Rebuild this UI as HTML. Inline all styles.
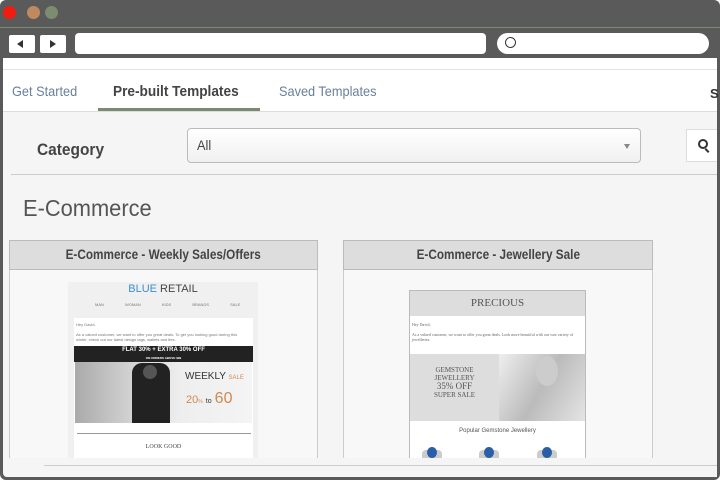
<!DOCTYPE html>
<html><head><style>
*{margin:0;padding:0;box-sizing:border-box}
body{width:720px;height:480px;background:#fff;font-family:"Liberation Sans",sans-serif;position:relative;overflow:hidden}
.a{position:absolute}
.serif{font-family:"Liberation Serif",serif}
.n{transform:scaleX(0.91);transform-origin:left top;white-space:nowrap}
</style></head><body>
<div class="a" style="left:0;top:0;width:720px;height:480px;background:#5a5a5a;border-radius:6px"></div>
<div class="a" style="left:0;top:27px;width:720px;height:1px;background:#7c8c70"></div>
<div class="a" style="left:3px;top:6px;width:13px;height:13px;border-radius:50%;background:#f01c10"></div>
<div class="a" style="left:27px;top:6px;width:13px;height:13px;border-radius:50%;background:#c08a60"></div>
<div class="a" style="left:45px;top:6px;width:13px;height:13px;border-radius:50%;background:#7c8c70"></div>
<div class="a" style="left:9px;top:35px;width:26px;height:18px;background:#fff;border-radius:2px"></div>
<div class="a" style="left:17px;top:40px;width:0;height:0;border-top:4px solid transparent;border-bottom:4px solid transparent;border-right:6px solid #333"></div>
<div class="a" style="left:40px;top:35px;width:26px;height:18px;background:#fff;border-radius:2px"></div>
<div class="a" style="left:50px;top:40px;width:0;height:0;border-top:4px solid transparent;border-bottom:4px solid transparent;border-left:6px solid #333"></div>
<div class="a" style="left:75px;top:33px;width:411px;height:21px;background:#fff;border-radius:4px"></div>
<div class="a" style="left:497px;top:33px;width:212px;height:21px;background:#fff;border-radius:11px"></div>
<div class="a" style="left:505px;top:37px;width:11px;height:11px;border:1.5px solid #333;border-radius:50%"></div>
<div class="a" style="left:3px;top:58px;width:714px;height:419px;background:#f5f5f5;border-radius:0 0 4px 4px"></div>
<div class="a" style="left:3px;top:58px;width:714px;height:54px;background:#fff;border-bottom:1px solid #ddd"></div>
<div class="a" style="left:3px;top:69px;width:714px;height:1px;background:#e2e2e2"></div>
<div class="a n" style="left:12px;top:83px;font-size:14px;color:#6a7f9a">Get Started</div>
<div class="a n" style="left:113px;top:83px;font-size:15px;color:#444;font-weight:bold">Pre-built Templates</div>
<div class="a n" style="left:279px;top:83px;font-size:14px;color:#6a7f9a">Saved Templates</div>
<div class="a" style="left:710px;top:86px;font-size:13px;color:#333;font-weight:bold">S</div>
<div class="a" style="left:98px;top:108px;width:162px;height:3px;background:#7a8a70"></div>
<div class="a n" style="left:37px;top:140px;font-size:17px;color:#444;font-weight:bold">Category</div>
<div class="a" style="left:187px;top:128px;width:454px;height:35px;background:linear-gradient(#fff,#f0f0f0);border:1px solid #bbb;border-radius:4px"></div>
<div class="a n" style="left:197px;top:137px;font-size:14px;color:#444">All</div>
<div class="a" style="left:624px;top:144px;border-left:3px solid transparent;border-right:3px solid transparent;border-top:5px solid #888"></div>
<div class="a" style="left:686px;top:129px;width:31px;height:33px;background:#fff;border:1px solid #ddd;border-right:none"></div>
<div class="a" style="left:698px;top:139px;width:10px;height:10px;border:2px solid #333;border-radius:50%"></div>
<div class="a" style="left:706px;top:148px;width:2px;height:5px;background:#333;transform:rotate(-45deg)"></div>
<div class="a" style="left:11px;top:174px;width:706px;height:1px;background:#ccc"></div>
<div class="a n" style="left:23px;top:195px;font-size:23px;color:#555;transform:scaleX(0.95)">E-Commerce</div>
<div class="a" style="left:9px;top:240px;width:309px;height:219px;background:#f8f8f8;border:1px solid #ccc;border-radius:2px"></div>
<div class="a" style="left:9px;top:240px;width:309px;height:30px;background:#ddd;border:1px solid #bbb"></div>
<div class="a" style="left:9px;top:240px;width:309px;text-align:center;line-height:29px;font-size:14px;font-weight:bold;color:#444;"><span style="display:inline-block;transform:scaleX(0.84)">E-Commerce - Weekly Sales/Offers</span></div>
<div class="a" style="left:68px;top:282px;width:190px;height:176px;background:#f0f0f0"></div>
<div class="a" style="left:68px;top:283px;width:190px;text-align:center;font-size:11px;color:#444"><span style="color:#3a8fd6">BLUE</span> RETAIL</div>
<div class="a" style="left:95px;top:302px;font-size:4px;color:#777;word-spacing:20px">MAN WOMAN KIDS BRANDS SALE</div>
<div class="a" style="left:74px;top:318px;width:179px;height:140px;background:#fff"></div>
<div class="a" style="left:76px;top:322px;width:170px;font-size:4px;color:#777;line-height:5px">Hey David,<br><br>As a valued customer, we want to offer you great deals. To get you looking good during this winter, check out our latest design tags, wallets and ties.</div>
<div class="a" style="left:74px;top:346px;width:179px;height:16px;background:#222;color:#fff;font-size:6px;font-weight:bold;text-align:center;line-height:8px">FLAT 30% + EXTRA 30% OFF<br><span style="font-size:3px">ON ORDERS ABOVE $99</span></div>
<div class="a" style="left:75px;top:362px;width:177px;height:61px;background:linear-gradient(90deg,#aaa,#ddd 40%,#eee 60%,#f4f4f4)"></div>
<div class="a" style="left:132px;top:363px;width:38px;height:60px;background:#222;border-radius:10px 10px 0 0"></div>
<div class="a" style="left:143px;top:365px;width:14px;height:14px;background:#555;border-radius:50%"></div>
<div class="a" style="left:185px;top:371px;font-size:10px;color:#333">WEEKLY <span style="font-size:6px;color:#d08a50">SALE</span></div>
<div class="a" style="left:186px;top:390px;font-size:11px;color:#d08a50">20<span style="font-size:5px">%</span> <span style="color:#333;font-size:7px">to</span> <span style="font-size:16px">60</span></div>
<div class="a" style="left:77px;top:433px;width:174px;height:1px;background:#999"></div>
<div class="a serif" style="left:74px;top:444px;width:179px;text-align:center;font-size:6px;color:#444">LOOK GOOD</div>
<div class="a" style="left:343px;top:240px;width:310px;height:219px;background:#f8f8f8;border:1px solid #ccc;border-radius:2px"></div>
<div class="a" style="left:343px;top:240px;width:310px;height:30px;background:#ddd;border:1px solid #bbb"></div>
<div class="a" style="left:343px;top:240px;width:310px;text-align:center;line-height:29px;font-size:14px;font-weight:bold;color:#444;"><span style="display:inline-block;transform:scaleX(0.84)">E-Commerce - Jewellery Sale</span></div>
<div class="a" style="left:409px;top:290px;width:177px;height:169px;background:#fff;border:1px solid #bbb"></div>
<div class="a serif" style="left:410px;top:291px;width:175px;height:25px;background:#ddd;text-align:center;font-size:11px;color:#555;line-height:25px">PRECIOUS</div>
<div class="a serif" style="left:412px;top:322px;width:170px;font-size:4px;color:#666;line-height:5px">Hey David,<br><br>As a valued customer, we want to offer you great deals. Look more beautiful with our vast variety of jewelleries.</div>
<div class="a serif" style="left:410px;top:354px;width:89px;height:67px;background:#ddd;text-align:center;font-size:7px;color:#555;padding-top:12px;line-height:8px">GEMSTONE<br>JEWELLERY<br><span style="font-size:9px">35% OFF</span><br>SUPER SALE</div>
<div class="a" style="left:499px;top:354px;width:86px;height:67px;background:linear-gradient(120deg,#eee,#bbb 50%,#e4e4e4)"></div>
<div class="a" style="left:536px;top:356px;width:22px;height:30px;background:#ccc;border-radius:50%"></div>
<div class="a" style="left:410px;top:428px;width:175px;text-align:center;font-size:6px;color:#555">Popular Gemstone Jewellery</div>
<div class="a" style="left:422px;top:450px;width:20px;height:8px;background:#ccc;border-radius:4px 4px 0 0"></div>
<div class="a" style="left:479px;top:450px;width:20px;height:8px;background:#ccc;border-radius:4px 4px 0 0"></div>
<div class="a" style="left:537px;top:450px;width:20px;height:8px;background:#ccc;border-radius:4px 4px 0 0"></div>
<div class="a" style="left:427px;top:447px;width:10px;height:11px;background:#2a5fa8;border-radius:50%"></div>
<div class="a" style="left:484px;top:447px;width:10px;height:11px;background:#2a5fa8;border-radius:50%"></div>
<div class="a" style="left:542px;top:447px;width:10px;height:11px;background:#2a5fa8;border-radius:50%"></div>
<div class="a" style="left:9px;top:458px;width:708px;height:19px;background:#f5f5f5"></div>
<div class="a" style="left:44px;top:465px;width:673px;height:1px;background:#ccc"></div>
</body></html>
